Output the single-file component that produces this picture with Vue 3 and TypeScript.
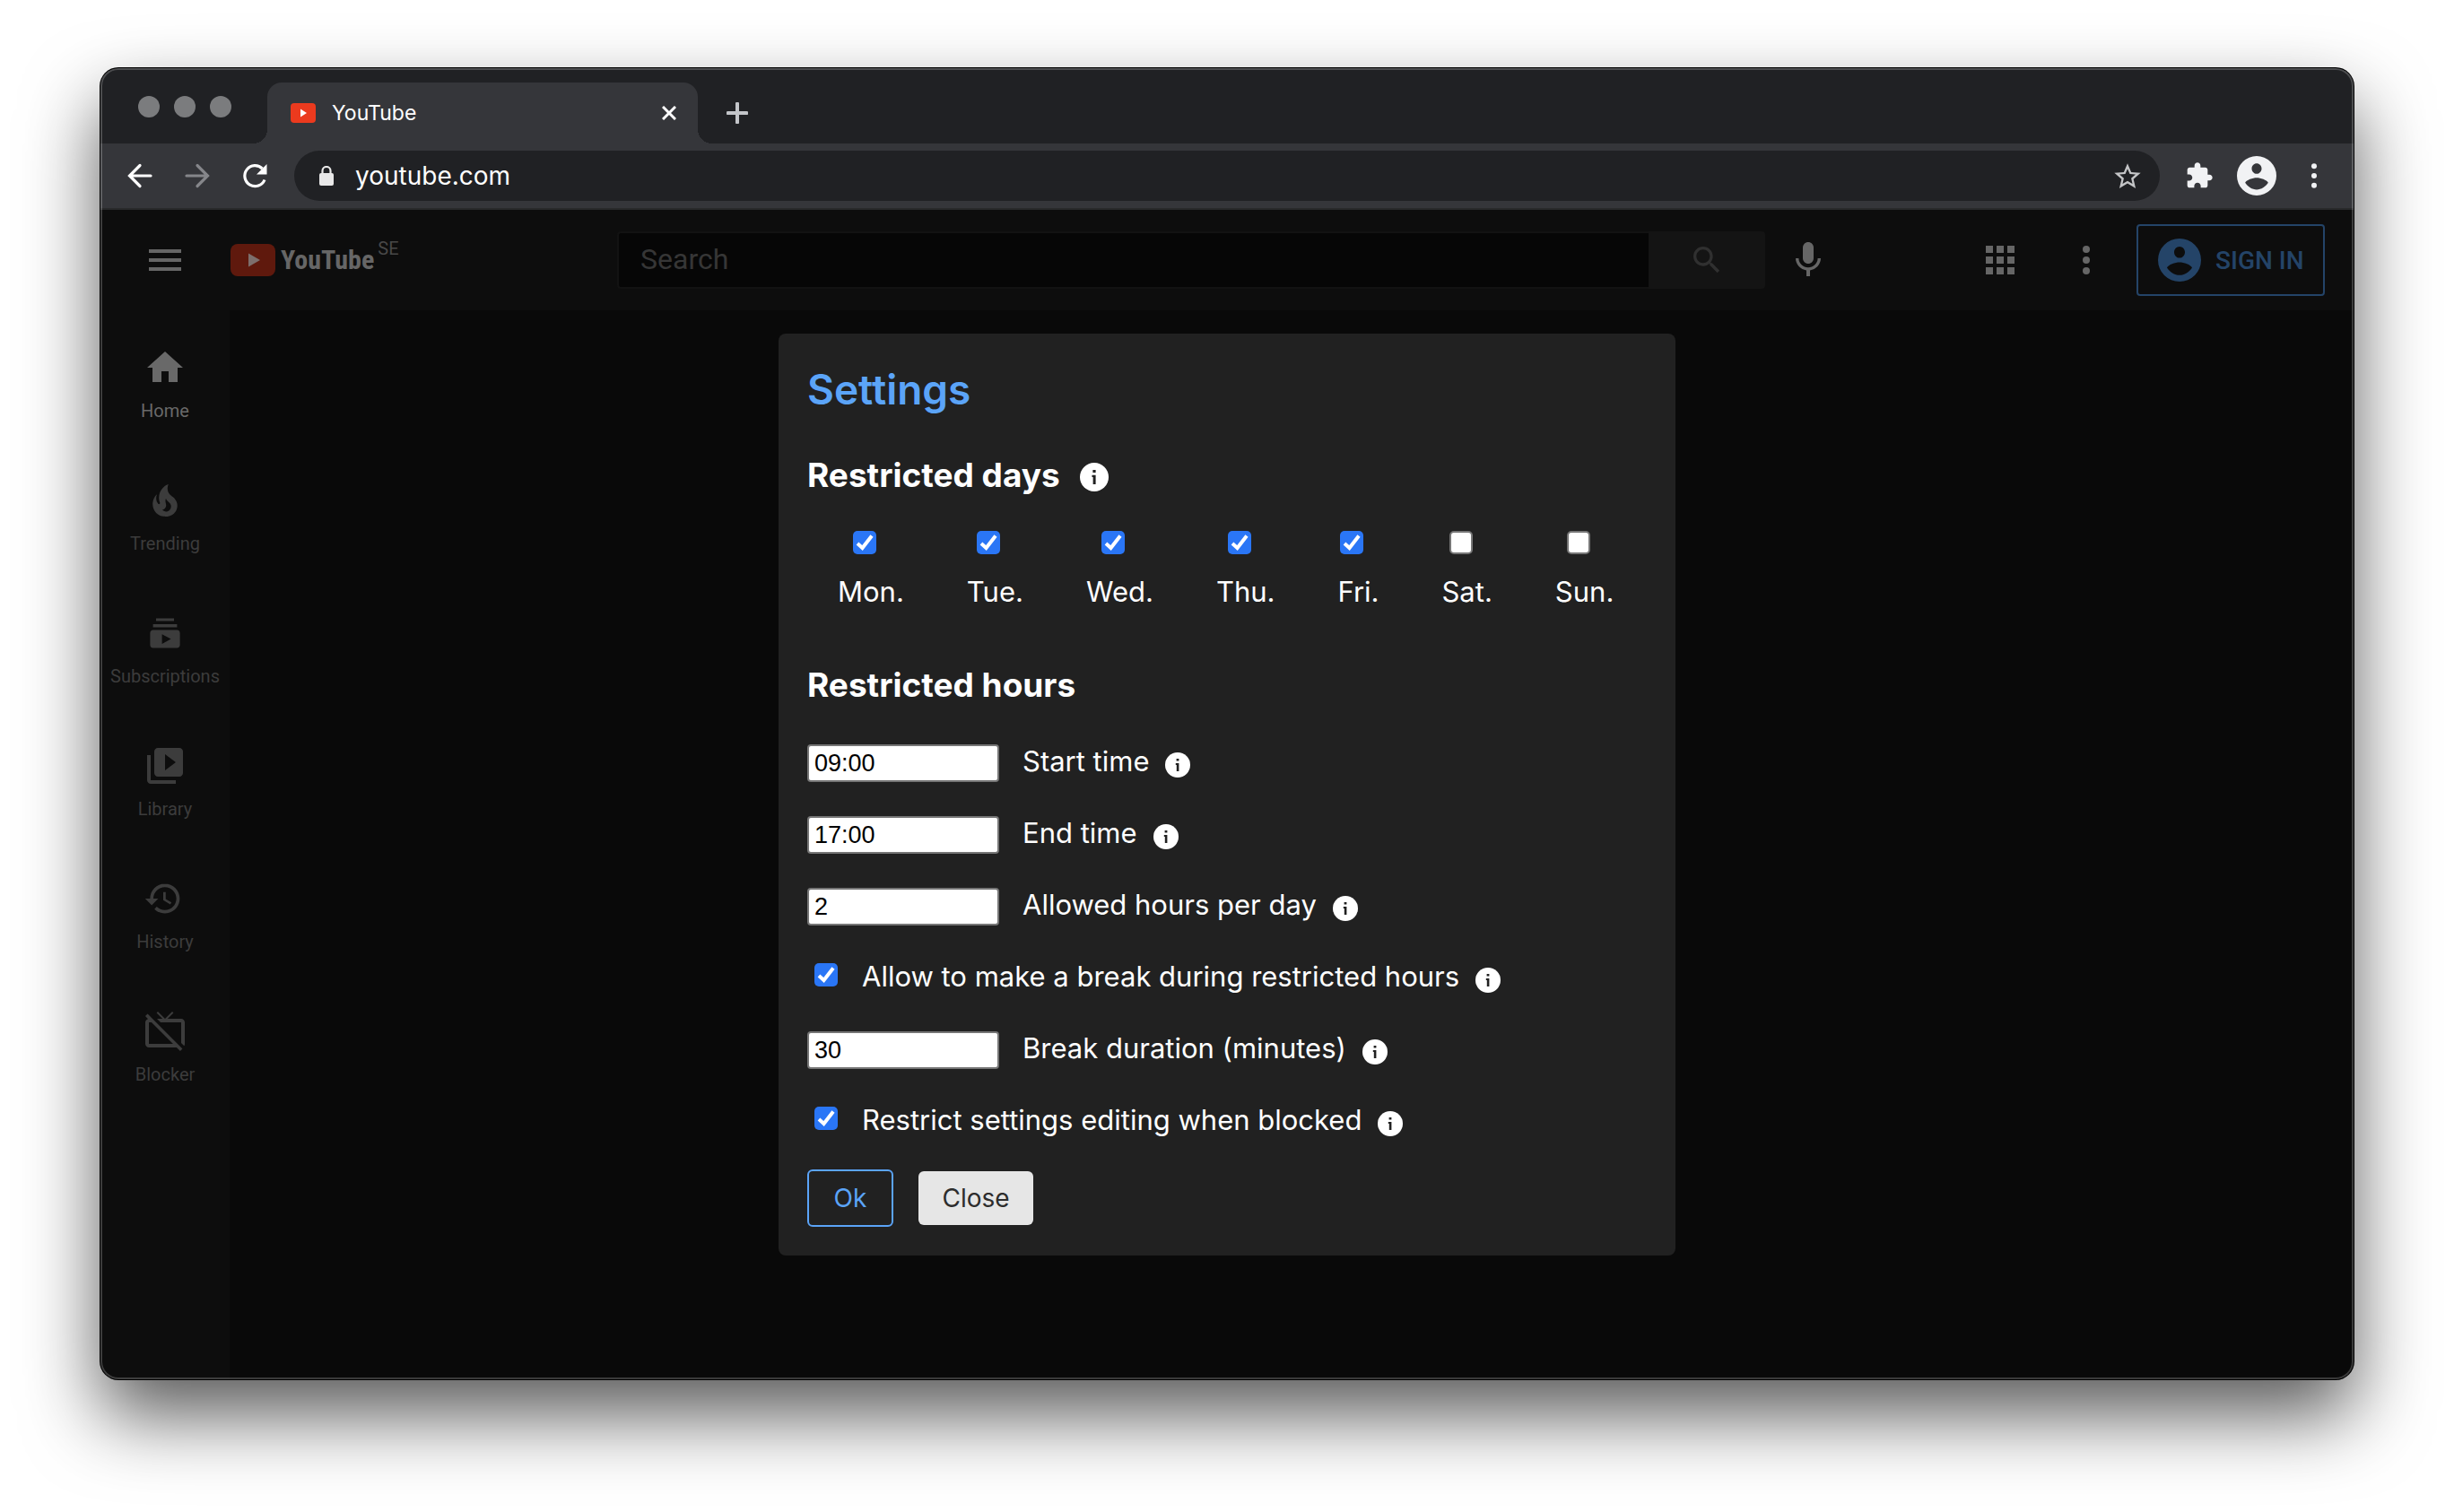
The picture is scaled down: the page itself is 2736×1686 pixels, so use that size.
<script setup lang="ts">
import { reactive } from 'vue'

interface Day { id: string; label: string; restricted: boolean }
interface NavItem { label: string; path: string; active?: boolean }

const days = reactive<Day[]>([
  { id: 'mon', label: 'Mon.', restricted: true },
  { id: 'tue', label: 'Tue.', restricted: true },
  { id: 'wed', label: 'Wed.', restricted: true },
  { id: 'thu', label: 'Thu.', restricted: true },
  { id: 'fri', label: 'Fri.', restricted: true },
  { id: 'sat', label: 'Sat.', restricted: false },
  { id: 'sun', label: 'Sun.', restricted: false },
])

const settings = reactive<Record<string, string | boolean>>({
  start: '09:00',
  end: '17:00',
  allowed: '2',
  allowBreak: true,
  breakMinutes: '30',
  lockSettings: true,
})

const fields = [
  { id: 'start', label: 'Start time', type: 'text' },
  { id: 'end', label: 'End time', type: 'text' },
  { id: 'allowed', label: 'Allowed hours per day', type: 'text' },
  { id: 'allowBreak', label: 'Allow to make a break during restricted hours', type: 'checkbox' },
  { id: 'breakMinutes', label: 'Break duration (minutes)', type: 'text' },
  { id: 'lockSettings', label: 'Restrict settings editing when blocked', type: 'checkbox' },
]

const nav: NavItem[] = [
  { label: 'Home', active: true, path: 'M10 20v-6h4v6h5v-8h3L12 3 2 12h3v8z' },
  { label: 'Trending', path: 'M17.53 11.2c-.23-.3-.5-.56-.76-.82-.65-.6-1.4-1.03-2.03-1.66C13.3 7.26 13 4.85 13.91 3c-.91.23-1.75.75-2.45 1.32-2.54 2.08-3.54 5.75-2.34 8.9.04.1.08.2.08.33 0 .22-.15.42-.35.5-.22.1-.46.04-.64-.12-.06-.05-.1-.1-.15-.17-1.1-1.43-1.28-3.48-.53-5.12C5.89 10 5 12.3 5.14 14.47c.04.5.1 1 .27 1.5.14.6.4 1.2.72 1.73 1.04 1.73 2.87 2.97 4.84 3.22 2.1.27 4.35-.12 5.96-1.6 1.8-1.66 2.45-4.32 1.5-6.6l-.13-.26c-.2-.46-.47-.87-.8-1.25l.03-.01zm-3.1 6.3c-.28.24-.73.5-1.08.6-1.1.4-2.2-.16-2.87-.82 1.19-.28 1.89-1.16 2.09-2.05.17-.8-.14-1.46-.27-2.23-.12-.74-.1-1.37.18-2.06.17.38.37.76.6 1.06.76 1 1.95 1.44 2.2 2.8.04.14.06.28.06.43.03.82-.32 1.72-.92 2.27h.01z' },
  { label: 'Subscriptions', path: 'M18.7 8.7H5.3V7h13.4v1.7zm-1.7-5H7v1.6h10V3.700zm3.300 8.300v6.600c0 1-.7 1.600-1.600 1.600H5.300c-1 0-1.600-.7-1.600-1.600V12c0-1 .7-1.700 1.600-1.700h13.400c1 0 1.600.8 1.600 1.700zm-5 3.300l-5-2.700v5.400l5-2.700z' },
  { label: 'Library', path: 'M4 6H2v14c0 1.100.9 2 2 2h14v-2H4V6zm16-4H8c-1.100 0-2 .9-2 2v12c0 1.100.9 2 2 2h12c1.100 0 2-.9 2-2V4c0-1.100-.9-2-2-2zm-8 12.500v-9l6 4.500-6 4.500z' },
  { label: 'History', path: 'M11.900 3.750c-4.550 0-8.230 3.700-8.230 8.250H.92l3.570 3.570.04.130 3.700-3.700H5.500c0-3.540 2.870-6.420 6.420-6.420 3.540 0 6.400 2.880 6.400 6.420s-2.860 6.420-6.400 6.420c-1.780 0-3.380-.73-4.540-1.900l-1.300 1.300c1.500 1.500 3.550 2.430 5.830 2.430 4.580 0 8.280-3.700 8.280-8.250 0-4.560-3.700-8.250-8.300-8.250zM11 8.330v4.600l3.920 2.300.66-1.100-3.200-1.900v-3.900H11z' },
  { label: 'Blocker', path: 'M1 3.540l1.530 1.530C1.650 5.280 1 6.060 1 7v12c0 1.100.9 2 2 2h15.460l2 2 1.260-1.270L2.270 2.270 1 3.540zM3 19V7h1.460l12 12H3zM21 5h-7.580l3.290-3.300L16 1l-4 4-4-4-.7.700L10.580 5H7.520l2 2H21v11.480l1.650 1.650c.22-.32.350-.71.350-1.130V7c0-1.110-.89-2-2-2z' },
]

const accountPath = 'M12 0a12 12 0 1 0 0 24 12 12 0 0 0 0-24zm0 4.500c1.660 0 3 1.400 3 3.100s-1.340 3.200-3 3.200-3-1.500-3-3.200 1.340-3.100 3-3.100zm0 15.900c-2.700 0-5.500-1.800-7-4.200.8-1.700 4.600-3 7-3s6.200 1.300 7 3c-1.500 2.400-4.300 4.200-7 4.200z'
</script>

<template>
  <div class="desktop">
    <div class="window">
      <div class="tabstrip">
        <div class="lights"><span></span><span></span><span></span></div>
        <div class="tab">
          <svg class="favicon" viewBox="0 0 28 22"><rect width="28" height="22" rx="4" fill="#eb3a1e" /><path d="M11 6.500v9l7-4.500z" fill="#fff" /></svg>
          <span class="tab-title">YouTube</span>
          <button class="tab-close" aria-label="Close tab">
            <svg viewBox="0 0 16 16" width="16" height="16"><path d="M1 1l14 14M15 1L1 15" stroke="#fff" stroke-width="3" /></svg>
          </button>
        </div>
        <button class="new-tab" aria-label="New tab">
          <svg viewBox="0 0 24 24" width="24" height="24"><path d="M12 1.500v21M1.500 12h21" stroke="#c3c5c9" stroke-width="4" stroke-linecap="round" /></svg>
        </button>
      </div>

      <div class="toolbar">
        <button aria-label="Back"><svg viewBox="0 0 32 32"><path d="M28 16H5M16 4.500L4.500 16 16 27.500" fill="none" stroke="#fff" stroke-width="3.200" stroke-linecap="round" /></svg></button>
        <button aria-label="Forward"><svg viewBox="0 0 32 32"><path d="M4 16h23M16 4.500L27.500 16 16 27.500" fill="none" stroke="#85868a" stroke-width="3.200" stroke-linecap="round" /></svg></button>
        <button class="reload" aria-label="Reload"><svg viewBox="0 0 32 32"><path d="M27 20.500A11.500 11.500 0 1 1 24.500 8" fill="none" stroke="#fff" stroke-width="3.200" /><path d="M29.500 3v11.500H18z" fill="#fff" /></svg></button>
        <div class="omnibox">
          <svg class="lock" viewBox="0 0 18 22"><path d="M4.500 9V5.500a4.500 4.500 0 0 1 9 0V9" fill="none" stroke="#e8e8e8" stroke-width="2.200" /><rect x="1" y="8" width="16" height="14" rx="2" fill="#e8e8e8" /></svg>
          <input id="address" type="text" value="youtube.com" aria-label="Address" />
          <button aria-label="Bookmark this page"><svg viewBox="0 0 24 24"><path fill="#c4c5c7" d="M23 9.600l-7.900-.68L12 1.600 8.910 8.930 1 9.600l6 5.200L5.200 22.500 12 18.400l6.800 4.100-1.790-7.730L23 9.600zM12 16.300l-4.140 2.500 1.100-4.700-3.650-3.170 4.820-.42L12 6.100l1.880 4.440 4.820.42-3.650 3.170 1.100 4.700L12 16.300z" /></svg></button>
        </div>
        <button class="ext" aria-label="Extensions"><svg viewBox="0 0 24 24"><path fill="#f1f2f4" d="M20.500 11H19V7c0-1.100-.9-2-2-2h-4V3.500C13 2.120 11.880 1 10.500 1S8 2.120 8 3.500V5H4c-1.100 0-1.990.9-1.990 2v3.800H3.500c1.490 0 2.700 1.210 2.700 2.700s-1.210 2.700-2.700 2.700H2V20c0 1.100.9 2 2 2h3.800v-1.500c0-1.490 1.210-2.700 2.700-2.700s2.700 1.210 2.700 2.700V22H17c1.100 0 2-.9 2-2v-4h1.500c1.380 0 2.500-1.120 2.500-2.500S21.880 11 20.500 11z" /></svg></button>
        <button class="profile" aria-label="Profile"><svg viewBox="0 0 24 24"><path fill="#f1f2f4" :d="accountPath" /></svg></button>
        <button class="menu" aria-label="Browser menu"><svg viewBox="0 0 32 32" fill="#f1f2f4"><circle cx="16" cy="4.500" r="3.200" /><circle cx="16" cy="16" r="3.200" /><circle cx="16" cy="27.500" r="3.200" /></svg></button>
      </div>

      <div class="page">
        <header class="masthead">
          <div class="brand">
            <button aria-label="Guide"><svg viewBox="0 0 24 24"><path d="M3 6h18v2H3zm0 5h18v2H3zm0 5h18v2H3z" fill="#666" /></svg></button>
            <a class="logo" href="#">
              <svg viewBox="0 0 50 36"><rect width="50" height="36" rx="8" fill="#5f190d" /><path d="M20 10.500v15L33 18z" fill="#7d6f6d" /></svg>
              <span class="wordmark">YouTube</span><span class="region">SE</span>
            </a>
          </div>
          <form class="search" @submit.prevent>
            <input id="search" type="text" placeholder="Search" aria-label="Search" />
            <button aria-label="Search"><svg viewBox="0 0 24 24"><path fill="#303030" d="M15.500 14h-.79l-.28-.27C15.410 12.590 16 11.110 16 9.500 16 5.910 13.090 3 9.500 3S3 5.910 3 9.500 5.910 16 9.500 16c1.610 0 3.090-.59 4.230-1.570l.27.28v.79l5 4.990L20.490 19l-4.990-5zm-6 0C7.010 14 5 11.990 5 9.500S7.010 5 9.500 5 14 7.010 14 9.500 11.990 14 9.500 14z" /></svg></button>
          </form>
          <button class="mic" aria-label="Search by voice"><svg viewBox="0 0 24 24" fill="#666"><path d="M12 14c1.660 0 3-1.340 3-3V5c0-1.660-1.340-3-3-3S9 3.340 9 5v6c0 1.660 1.340 3 3 3z" /><path d="M17.300 11c0 3-2.540 5.100-5.300 5.100S6.700 14 6.700 11H5c0 3.410 2.720 6.230 6 6.720V21h2v-3.280c3.280-.48 6-3.300 6-6.720h-1.700z" /></svg></button>
          <button class="apps" aria-label="Apps"><svg viewBox="0 0 24 24"><path fill="#666" d="M4 4h4v4H4zm6 0h4v4h-4zm6 0h4v4h-4zM4 10h4v4H4zm6 0h4v4h-4zm6 0h4v4h-4zM4 16h4v4H4zm6 0h4v4h-4zm6 0h4v4h-4z" /></svg></button>
          <button class="more" aria-label="More"><svg viewBox="0 0 24 24" fill="#666"><circle cx="12" cy="6" r="2" /><circle cx="12" cy="12" r="2" /><circle cx="12" cy="18" r="2" /></svg></button>
          <a class="signin" href="#"><svg viewBox="0 0 24 24"><path fill="#244468" :d="accountPath" /></svg>SIGN IN</a>
        </header>

        <nav class="sidebar">
          <a v-for="item in nav" :key="item.label" href="#" :class="{ active: item.active }">
            <svg viewBox="0 0 24 24"><path fill="currentColor" fill-rule="evenodd" :d="item.path" /></svg>
            <span>{{ item.label }}</span>
          </a>
        </nav>

        <div class="overlay">
          <form class="dialog" @submit.prevent>
            <h1>Settings</h1>
            <h2>Restricted days
              <svg class="info large" viewBox="0 0 28 28"><circle cx="14" cy="14" r="14" fill="#fff" /><path d="M12.600 7h2.800v2.600h-2.800zM11.800 12h3.600v9h-2.600v-7h-1z" fill="#212121" /></svg>
            </h2>
            <div class="days">
              <label v-for="day in days" :key="day.id" :for="day.id">
                <input :id="day.id" v-model="day.restricted" type="checkbox" />
                {{ day.label }}
              </label>
            </div>
            <h2>Restricted hours</h2>
            <div class="fields">
              <div v-for="field in fields" :key="field.id" class="field">
                <input v-if="field.type === 'checkbox'" :id="field.id" v-model="settings[field.id]" type="checkbox" />
                <input v-else :id="field.id" v-model="settings[field.id]" type="text" />
                <label :for="field.id">{{ field.label }}</label>
                <svg class="info" viewBox="0 0 28 28"><circle cx="14" cy="14" r="14" fill="#fff" /><path d="M12.600 7h2.800v2.600h-2.800zM11.800 12h3.600v9h-2.600v-7h-1z" fill="#212121" /></svg>
              </div>
            </div>
            <div class="actions">
              <button class="ok" type="submit">Ok</button>
              <button class="close" type="button">Close</button>
            </div>
          </form>
        </div>
      </div>
    </div>
  </div>
</template>

<style>
body { background: #fff; }
</style>

<style scoped>
* { box-sizing: border-box; }
button { margin: 0; padding: 0; border: 0; background: none; display: flex; align-items: center; justify-content: center; flex: none; }
a { text-decoration: none; }
svg { display: block; flex: none; }

.desktop {
  min-height: 100vh;
  padding: 76px 112px 148px;
  display: flex;
  font-family: Inter, "Liberation Sans", sans-serif;
}
.window {
  position: relative;
  flex: 1;
  min-width: 0;
  display: flex;
  flex-direction: column;
  border-radius: 20px;
  background: #090909;
  overflow: hidden;
  box-shadow: 0 0 0 1px #000, 0 40px 84px rgba(0, 0, 0, 0.65);
}
.window::after {
  content: "";
  position: absolute;
  inset: 0;
  border-radius: 20px;
  box-shadow: inset 0 0 0 2px rgba(255, 255, 255, 0.2);
  pointer-events: none;
}

.tabstrip { height: 84px; background: #202124; display: flex; align-items: flex-end; }
.lights { display: flex; gap: 16px; width: 186px; height: 84px; padding: 31px 0 0 42px; }
.lights span { width: 24px; height: 24px; border-radius: 50%; background: #7b7c7e; }
.tab {
  position: relative;
  width: 480px;
  height: 68px;
  padding: 0 24px 0 26px;
  display: flex;
  align-items: center;
  border-radius: 16px 16px 0 0;
  background: #35363a;
  color: #fff;
  font-size: 23px;
}
.tab::before, .tab::after {
  content: "";
  position: absolute;
  bottom: 0;
  width: 16px;
  height: 16px;
}
.tab::before { right: 100%; background: radial-gradient(circle at 0 0, transparent 16px, #35363a 16px); }
.tab::after { left: 100%; background: radial-gradient(circle at 100% 0, transparent 16px, #35363a 16px); }
.favicon { width: 28px; height: 22px; margin-right: 18px; }
.tab-title { flex: 1; }
.new-tab { height: 68px; margin-left: 32px; }

.toolbar { height: 74px; padding: 0 28px; display: flex; align-items: center; background: #35363a; border-bottom: 2px solid #292a2b; }
.toolbar svg { width: 32px; height: 32px; }
.toolbar > button { width: 32px; height: 32px; margin-right: 32px; }
.toolbar > .reload { margin-right: 28px; }
.omnibox { flex: 1; min-width: 0; height: 56px; margin-right: 28px; padding: 0 20px 0 27px; display: flex; align-items: center; border-radius: 28px; background: #202124; }
.omnibox .lock { width: 18px; height: 22px; margin-right: 23px; }
.omnibox input { flex: 1; min-width: 0; padding: 0; border: 0; outline: 0; background: none; color: #fff; font-family: inherit; font-size: 28px; }
.toolbar > .ext { margin-right: 26px; }
.toolbar > .profile { width: 44px; height: 44px; margin-right: 26px; }
.toolbar .profile svg { width: 44px; height: 44px; }
.toolbar > .menu { margin-right: 0; }
.toolbar .menu svg { width: 30px; height: 30px; }

.page { position: relative; flex: 1; display: flex; flex-direction: column; align-items: flex-start; font-family: Roboto, sans-serif; }
.masthead { align-self: stretch; height: 112px; padding-right: 32px; display: flex; align-items: center; background: #0d0d0d; }
.masthead svg { width: 48px; height: 48px; }
.brand { width: 576px; padding-left: 48px; display: flex; align-items: center; flex: none; }
.logo { margin-left: 49px; display: flex; align-items: center; color: #666; }
.masthead .logo svg { width: 50px; height: 36px; margin-right: 6px; }
.wordmark { font-family: "Roboto Condensed", "Liberation Sans Narrow", Roboto, sans-serif; font-weight: 700; font-size: 30px; line-height: 36px; }
.region { margin-left: 4px; padding-bottom: 26px; font-size: 20px; line-height: 24px; color: #484848; }
.search { flex: 1; min-width: 0; height: 64px; display: flex; }
.search input { flex: 1; min-width: 0; padding: 0 24px 2px; border: 2px solid #121212; border-right: 0; border-radius: 4px 0 0 4px; outline: 0; background: #060606; color: #666; font-family: inherit; font-size: 32px; }
.search input::placeholder { color: #363636; opacity: 1; }
.search button { width: 130px; height: 64px; border-radius: 0 4px 4px 0; background: #141414; }
.masthead .search svg { width: 40px; height: 40px; }
.mic { margin-left: 24px; margin-right: 166px; }
.more { margin: 0 32px 0 48px; }
.signin { width: 210px; height: 80px; padding-left: 22px; display: flex; align-items: center; gap: 16px; border: 2px solid #244468; border-radius: 4px; color: #244468; font-size: 28px; font-weight: 500; white-space: nowrap; }

.sidebar { flex: 1; width: 144px; padding-top: 8px; background: #0d0d0d; }
.sidebar a { height: 148px; padding-top: 32px; display: flex; flex-direction: column; align-items: center; gap: 10px; color: #3c3c3c; font-size: 20px; line-height: 28px; }
.sidebar svg { width: 48px; height: 48px; }
.sidebar .active { color: #696969; }

.overlay { position: absolute; inset: 0; padding-top: 138px; display: flex; justify-content: center; align-items: flex-start; }
.dialog { width: 1000px; padding: 30px 32px 32px; border-radius: 8px; background: #212121; color: #fff; font-family: Inter, "Liberation Sans", sans-serif; font-size: 31px; line-height: 40px; }
h1 { margin: 0; font-size: 46px; font-weight: 600; line-height: 64px; color: #5ba4f8; }
h2 { margin: 0; display: flex; align-items: center; gap: 22px; font-size: 37px; font-weight: 700; line-height: 48px; }
h1 + h2 { margin-top: 40px; }
input[type="checkbox"] { appearance: none; flex: none; width: 26px; height: 26px; margin: 0; border: 2px solid #767676; border-radius: 5px; background: #fff; }
input[type="checkbox"]:checked {
  border: 0;
  background: #2a76f6 url("data:image/svg+xml,%3Csvg xmlns='http://www.w3.org/2000/svg' viewBox='0 0 26 26'%3E%3Cpath d='M5 14l5.500 5L21 5.500' fill='none' stroke='white' stroke-width='4'/%3E%3C/svg%3E") center / 26px 26px;
}
.info { width: 28px; height: 28px; margin-top: 4px; }
.info.large { width: 32px; height: 32px; }
.days { padding: 38px 34px 0; display: flex; gap: 70px; }
.days label { display: flex; flex-direction: column; align-items: center; gap: 22px; }
.days input { margin-right: 14px; }
.days + h2 { margin-top: 60px; }
.fields { margin-top: 42px; display: flex; flex-direction: column; gap: 38px; }
.field { height: 42px; display: flex; align-items: center; }
.field label { margin-bottom: 4px; }
.field input[type="text"] { width: 214px; height: 42px; margin-right: 26px; padding: 0 6px; border: 2px solid #767676; border-radius: 4px; background: #fff; color: #000; font-family: "Liberation Sans", Arial, sans-serif; font-size: 27px; }
.field input[type="checkbox"] { margin: 0 27px 8px 8px; }
.field .info { margin-left: 18px; }
.actions { margin-top: 32px; display: flex; align-items: center; gap: 28px; }
.actions button { border-radius: 6px; font-family: inherit; font-size: 28px; }
.actions .ok { width: 96px; height: 64px; border: 2px solid #5ba4f8; color: #5ba4f8; }
.actions .close { width: 128px; height: 60px; background: #e6e6e6; color: #2d2d2d; }
</style>
